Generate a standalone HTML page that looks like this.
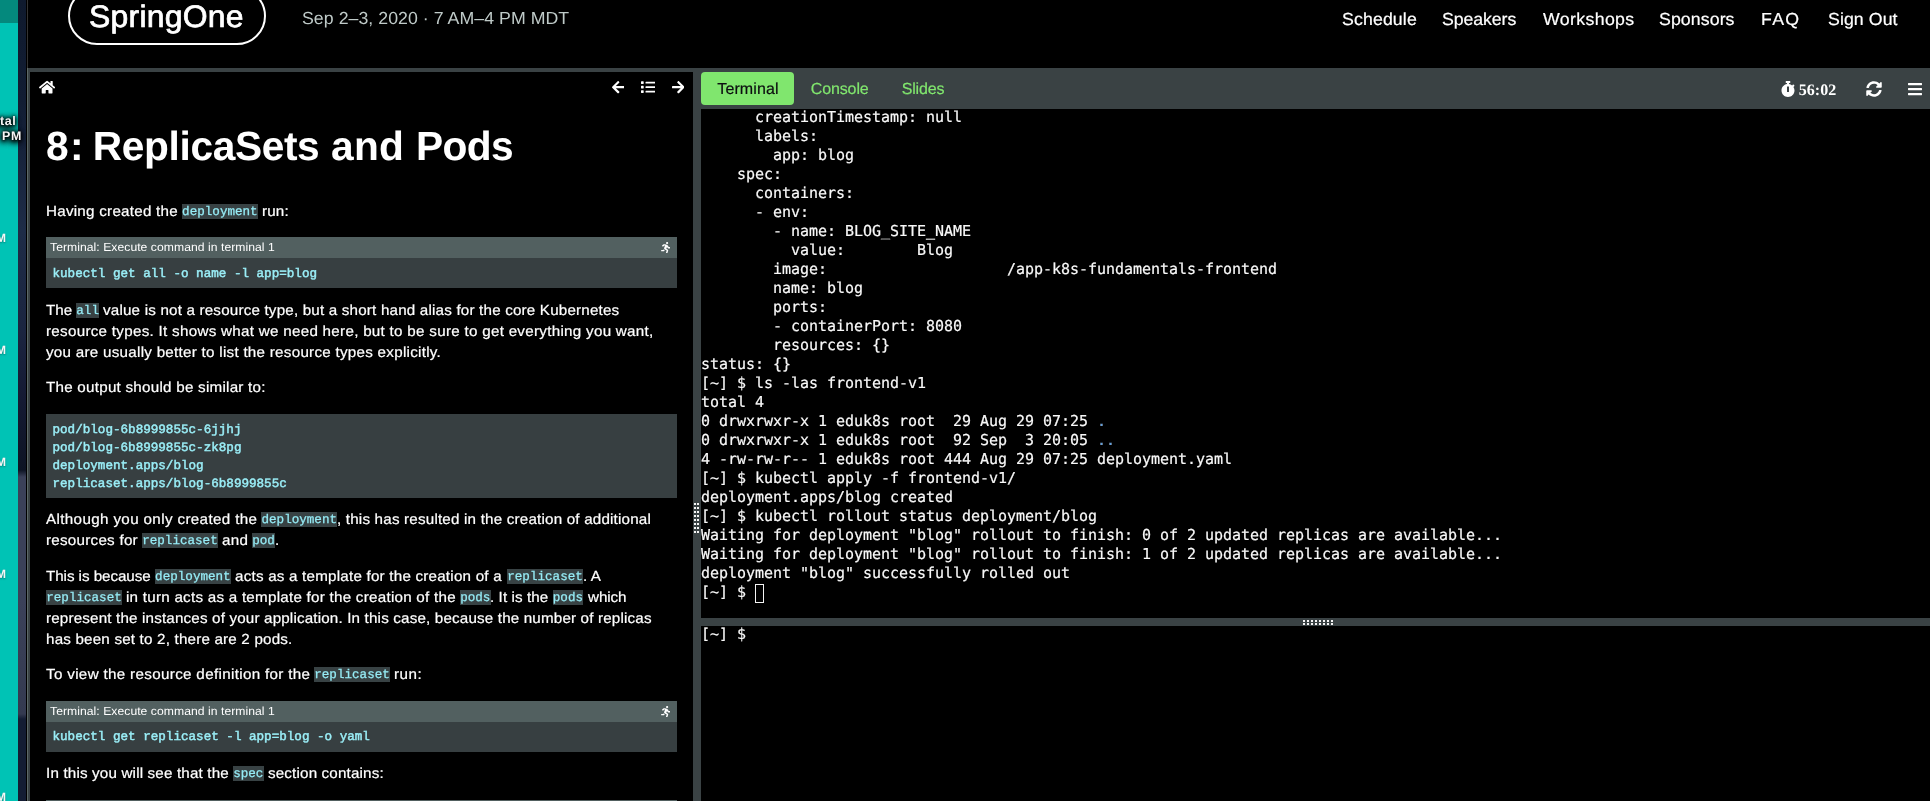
<!DOCTYPE html>
<html lang="en">
<head>
<meta charset="utf-8">
<title>SpringOne Workshop - 8: ReplicaSets and Pods</title>
<style>
*{box-sizing:border-box;margin:0;padding:0}
html,body{width:1930px;height:801px;overflow:hidden;background:#000}
body{position:relative;font-family:"Liberation Sans",sans-serif;color:#fff;text-rendering:geometricPrecision}
.abs{position:absolute}
#root{position:absolute;left:0;top:0;width:1930px;height:801px;overflow:hidden;will-change:transform;background:#000}
/* left edge strips */
#teal{left:0;top:0;width:18.1px;height:801px;background:#00c3b5}
#tealtop{left:0;top:0;width:18.1px;height:22.5px;background:#04897d}
#navy{left:18px;top:0;width:8.3px;height:801px;background:linear-gradient(to bottom,#0f1a2e 0,#121d33 100px,#1e2c47 230px,#1b2540 330px,#151a33 400px,#0d1424 470px,#3b4159 477px,#3b4159 600px,#343a50 714px,#141d33 719px,#141d33 801px)}
#edge{left:26.6px;top:0;width:1.4px;height:68px;background:#343434}
.side{color:#f6f6f6;font-weight:bold;font-size:12px;line-height:12px;white-space:pre;text-shadow:0 1px 2px rgba(0,0,0,.35)}
.side.dk{text-shadow:0 0 3px #000,0 1px 4px #000,0 0 6px #000,-1px 3px 6px #000,-2px 2px 7px #000}
/* header */
#pill{left:67.6px;top:-13px;width:198.6px;height:58px;border:2px solid #fff;border-radius:29px}
.logo{font-size:31px;line-height:34px;white-space:pre;-webkit-text-stroke:0.7px #fff}
.date{font-size:17.4px;line-height:20px;color:#bfcac8;white-space:pre}
.nav{font-size:17.4px;line-height:20px;white-space:pre;color:#fff;-webkit-text-stroke:0.2px #fff}
/* frame */
#ftop{left:27px;top:68px;width:1903px;height:4px;background:#3a4244}
#fleft{left:26.7px;top:68px;width:3.3px;height:733px;background:linear-gradient(to right,#5d6968 0,#5d6968 0.8px,#3a4244 0.8px)}
#vsplit{left:693px;top:72px;width:8px;height:729px;background:#3a4244}
#tabbar{left:701px;top:72px;width:1229px;height:37px;background:#3a4244}
#hsplit{left:701px;top:618px;width:1229px;height:8px;background:#3a4244}
.dot{position:absolute;width:2px;height:2px;background:#f4f4f4}
#tabTerm{left:701px;top:72px;width:93px;height:33px;background:#80e66e;border-radius:4px;color:#1d2124;font-size:16px;line-height:33px;text-align:center}
.tabt{z-index:5;font-size:16px;line-height:20px;color:#80e66e;white-space:pre;-webkit-text-stroke:0.2px #80e66e}
.tabt.tk{color:#0c0f10;-webkit-text-stroke:0.2px #0c0f10}
.clock{z-index:5;font-family:"Liberation Serif",serif;font-weight:bold;font-size:16px;line-height:20px;white-space:pre}
/* terminal */
.term{left:701px;width:1229px;overflow:hidden;background:#000}
.term pre{position:absolute;left:0;font-family:"DejaVu Sans Mono","Liberation Mono",monospace;font-size:15px;line-height:19px;color:#f8f8f8;white-space:pre;letter-spacing:-0.03px;-webkit-text-stroke:0.2px #f8f8f8}
.term .b{color:#5c9ddf}
.cursor{width:9.2px;height:19px;border:1px solid #f4f4f4}
/* workshop panel */
#panel{left:30px;top:72px;width:663px;height:729px;overflow:hidden;background:#000}
#panel svg{position:absolute;fill:#fff}
.h1{font-size:40.7px;line-height:44px;font-weight:bold;white-space:pre}
.ln{position:absolute;font-size:14.6px;line-height:21px;white-space:pre;color:#fff;-webkit-text-stroke:0.22px #fff}
code.chip{position:absolute;display:block;height:15px;line-height:17.3px;font-family:"Liberation Mono",monospace;font-size:12.6px;color:#96ecf6;background:#384244;white-space:pre;text-align:center;-webkit-text-stroke:0.25px #96ecf6}
.ic{fill:#fff}
.fx{transform-origin:0 50%}
.hdt{font-size:11.8px;line-height:21px;white-space:pre;color:#fff}
.blk{position:absolute;left:16px;width:631px;background:#373f41}
.blk .hd{height:21px;background:#526060;font-size:11.52px;line-height:21px;padding-left:4.7px;color:#fff;white-space:nowrap}
.blk pre{font-family:"Liberation Mono",monospace;font-weight:normal;-webkit-text-stroke:0.45px #9aeef7;font-size:12.6px;line-height:18px;color:#9aeef7;padding:6.7px 6.5px;white-space:pre}
</style>
</head>
<body>
<div id="root">
<!-- left strips -->
<div class="abs" id="teal"></div>
<div class="abs" id="tealtop"></div>
<div class="abs" id="navy"></div>
<div class="abs" id="edge"></div>

<div class="abs side dk" style="left:-7.6px;top:115px;font-size:12.5px;letter-spacing:0.6px">stal</div>
<div class="abs side dk" style="left:2px;top:130.4px;font-size:12.4px;letter-spacing:0.7px">PM</div>
<div class="abs side" style="left:-4px;top:231.6px">M</div>
<div class="abs side" style="left:-4px;top:343.6px">M</div>
<div class="abs side" style="left:-4px;top:455.6px">M</div>
<div class="abs side" style="left:-4px;top:567.6px">M</div>
<div class="abs side" style="left:-4px;top:790.6px">M</div>
<!-- header -->
<div class="abs" id="pill"></div>
<div class="abs fx logo" style="left:88.87px;top:0.0px;letter-spacing:0.236px;transform:scaleX(1.03)">SpringOne</div>
<div class="abs fx date" style="left:301.70px;top:8.1px;letter-spacing:0.035px;transform:scaleX(1.02)">Sep 2–3, 2020 · 7 AM–4 PM MDT</div>
<div class="abs fx nav" style="left:1341.70px;top:8.9px;letter-spacing:0.113px;transform:scaleX(1.02)">Schedule</div>
<div class="abs fx nav" style="left:1441.60px;top:8.9px;letter-spacing:-0.091px;transform:scaleX(1.02)">Speakers</div>
<div class="abs fx nav" style="left:1543.00px;top:8.9px;letter-spacing:0.341px;transform:scaleX(1.02)">Workshops</div>
<div class="abs fx nav" style="left:1659.40px;top:8.9px;letter-spacing:0.077px;transform:scaleX(1.02)">Sponsors</div>
<div class="abs fx nav" style="left:1760.78px;top:8.9px;letter-spacing:1.306px;transform:scaleX(1.02)">FAQ</div>
<div class="abs fx nav" style="left:1828.30px;top:8.9px;letter-spacing:0.070px;transform:scaleX(1.02)">Sign Out</div>
<div class="abs fx tabt tk" style="left:717.30px;top:79.6px;letter-spacing:0.098px;transform:scaleX(1.0)">Terminal</div>
<div class="abs fx tabt" style="left:810.80px;top:79.6px;letter-spacing:-0.134px;transform:scaleX(1.0)">Console</div>
<div class="abs fx tabt" style="left:901.70px;top:79.6px;letter-spacing:-0.176px;transform:scaleX(1.0)">Slides</div>
<div class="abs fx clock" style="left:1798.70px;top:81.3px;letter-spacing:0.043px;transform:scaleX(1.0)">56:02</div>

<!-- frame -->
<div class="abs" id="ftop"></div>
<div class="abs" id="fleft"></div>
<div class="abs" id="panel">
<svg class="abs ic" style="left:9.00px;top:7.60px;width:16.20px;height:14.40px" viewBox="0 0 576 512"><path d="M280.37 148.26L96 300.11V464a16 16 0 0 0 16 16l112.06-.29a16 16 0 0 0 15.92-16V368a16 16 0 0 1 16-16h64a16 16 0 0 1 16 16v95.64a16 16 0 0 0 16 16.05L464 480a16 16 0 0 0 16-16V300L295.67 148.26a12.19 12.19 0 0 0-15.3 0zM571.6 251.47L488 182.56V44.05a12 12 0 0 0-12-12h-56a12 12 0 0 0-12 12v72.61L318.47 43a48 48 0 0 0-61 0L4.34 251.47a12 12 0 0 0-1.6 16.9l25.5 31A12 12 0 0 0 45.15 301l235.22-193.74a12.19 12.19 0 0 1 15.3 0L530.9 301a12 12 0 0 0 16.9-1.6l25.5-31a12 12 0 0 0-1.7-16.93z"/></svg>
<svg class="abs ic" style="left:581.70px;top:7.74px;width:12.60px;height:14.40px" viewBox="0 0 448 512"><path d="M257.5 445.1l-22.2 22.2c-9.4 9.4-24.6 9.4-33.9 0L7 273c-9.4-9.4-9.4-24.6 0-33.9L201.4 44.7c9.4-9.4 24.6-9.4 33.9 0l22.2 22.2c9.5 9.5 9.3 25-.4 34.3L136.6 216H424c13.3 0 24 10.7 24 24v32c0 13.3-10.7 24-24 24H136.6l120.5 114.8c9.8 9.3 10 24.8.4 34.3z"/></svg>
<svg class="abs ic" style="left:610.50px;top:7.65px;width:14.40px;height:14.40px" viewBox="0 0 512 512"><path d="M80 368H16a16 16 0 0 0-16 16v64a16 16 0 0 0 16 16h64a16 16 0 0 0 16-16v-64a16 16 0 0 0-16-16zm0-320H16A16 16 0 0 0 0 64v64a16 16 0 0 0 16 16h64a16 16 0 0 0 16-16V64a16 16 0 0 0-16-16zm0 160H16a16 16 0 0 0-16 16v64a16 16 0 0 0 16 16h64a16 16 0 0 0 16-16v-64a16 16 0 0 0-16-16zm416 176H176a16 16 0 0 0-16 16v32a16 16 0 0 0 16 16h320a16 16 0 0 0 16-16v-32a16 16 0 0 0-16-16zm0-320H176a16 16 0 0 0-16 16v32a16 16 0 0 0 16 16h320a16 16 0 0 0 16-16V80a16 16 0 0 0-16-16zm0 160H176a16 16 0 0 0-16 16v32a16 16 0 0 0 16 16h320a16 16 0 0 0 16-16v-32a16 16 0 0 0-16-16z"/></svg>
<svg class="abs ic" style="left:641.70px;top:7.74px;width:12.60px;height:14.40px" viewBox="0 0 448 512"><path d="M190.5 66.9l22.2-22.2c9.4-9.4 24.6-9.4 33.9 0L441 239c9.4 9.4 9.4 24.6 0 33.9L246.6 467.3c-9.4 9.4-24.6 9.4-33.9 0l-22.2-22.2c-9.5-9.5-9.3-25 .4-34.3L311.4 296H24c-13.3 0-24-10.7-24-24v-32c0-13.3 10.7-24 24-24h287.4L190.9 101.2c-9.8-9.3-10-24.8-.4-34.3z"/></svg>
<h1 class="abs" style="left:0;top:0;width:663px;height:0"><span class="abs fx h1" style="left:16.10px;top:52.0px;letter-spacing:1.362px;transform:scaleX(1.0)">8:</span> <span class="abs fx h1" style="left:62.80px;top:52.0px;letter-spacing:-0.376px;transform:scaleX(1.0)">ReplicaSets</span> <span class="abs fx h1" style="left:301.10px;top:52.0px;letter-spacing:0.255px;transform:scaleX(1.0)">and</span> <span class="abs fx h1" style="left:386.00px;top:52.0px;letter-spacing:-0.619px;transform:scaleX(1.0)">Pods</span></h1>
<div class="blk" style="top:165px;height:51px"><div class="hd"></div><svg class="abs ic" style="left:614.80px;top:4.80px;width:9.36px;height:11.52px" viewBox="0 0 416 512"><path d="M272 96c26.510 0 48-21.490 48-48S298.510 0 272 0s-48 21.490-48 48 21.490 48 48 48zM113.690 317.470l-14.800 34.520H32c-17.670 0-32 14.330-32 32s14.330 32 32 32h77.450c19.250 0 36.580-11.440 44.110-29.090l8.790-20.520-10.670-6.300c-17.320-10.230-30.060-25.370-37.990-42.610zM384 223.990h-44.030l-26.060-53.250c-12.500-25.550-35.450-44.230-61.780-50.940l-71.080-21.140c-28.300-6.800-57.770-.55-80.840 17.140l-39.670 30.410c-14.030 10.750-16.690 30.830-5.920 44.860s30.840 16.660 44.860 5.920l39.690-30.410c7.670-5.890 17.440-8 25.270-6.140l14.700 4.370-37.460 87.390c-12.620 29.480-1.310 64.010 26.300 80.310l84.980 50.170-27.470 87.730c-5.280 16.860 4.110 34.810 20.970 40.090 3.190 1 6.410 1.480 9.580 1.480 13.610 0 26.230-8.770 30.520-22.450l31.640-101.060c5.910-20.770-2.890-43.080-21.640-54.390l-61.240-36.140 31.310-78.280 20.270 41.430c8 16.340 24.920 26.890 43.110 26.890H384c17.670 0 32-14.330 32-32s-14.330-31.990-32-31.990z"/></svg><pre>kubectl get all -o name -l app=blog</pre></div>
<div class="blk" style="top:342px;height:84px"><pre>pod/blog-6b8999855c-6jjhj
pod/blog-6b8999855c-zk8pg
deployment.apps/blog
replicaset.apps/blog-6b8999855c</pre></div>
<div class="blk" style="top:629px;height:51px"><div class="hd"></div><svg class="abs ic" style="left:614.80px;top:4.80px;width:9.36px;height:11.52px" viewBox="0 0 416 512"><path d="M272 96c26.510 0 48-21.490 48-48S298.510 0 272 0s-48 21.490-48 48 21.490 48 48 48zM113.690 317.470l-14.800 34.520H32c-17.670 0-32 14.330-32 32s14.330 32 32 32h77.450c19.250 0 36.580-11.440 44.110-29.090l8.790-20.520-10.670-6.300c-17.320-10.230-30.060-25.370-37.990-42.610zM384 223.990h-44.030l-26.060-53.250c-12.500-25.550-35.450-44.230-61.780-50.940l-71.080-21.140c-28.300-6.800-57.770-.55-80.840 17.140l-39.670 30.410c-14.030 10.750-16.690 30.830-5.920 44.860s30.840 16.660 44.860 5.920l39.690-30.410c7.670-5.890 17.440-8 25.270-6.140l14.700 4.370-37.460 87.390c-12.620 29.480-1.310 64.010 26.300 80.310l84.980 50.170-27.470 87.730c-5.280 16.860 4.110 34.810 20.970 40.090 3.190 1 6.410 1.480 9.580 1.480 13.610 0 26.230-8.770 30.520-22.450l31.640-101.060c5.910-20.770-2.890-43.080-21.640-54.390l-61.240-36.140 31.310-78.280 20.270 41.430c8 16.340 24.920 26.890 43.110 26.890H384c17.670 0 32-14.330 32-32s-14.330-31.990-32-31.990z"/></svg><pre style="padding-top:6.2px">kubectl get replicaset -l app=blog -o yaml</pre></div>
<div class="blk" style="top:728px;height:51px"><div class="hd"></div><svg class="abs ic" style="left:614.80px;top:4.80px;width:9.36px;height:11.52px" viewBox="0 0 416 512"><path d="M272 96c26.510 0 48-21.490 48-48S298.510 0 272 0s-48 21.490-48 48 21.490 48 48 48zM113.690 317.470l-14.800 34.520H32c-17.670 0-32 14.330-32 32s14.330 32 32 32h77.450c19.250 0 36.580-11.440 44.110-29.090l8.790-20.520-10.670-6.300c-17.320-10.230-30.060-25.370-37.990-42.610zM384 223.990h-44.030l-26.060-53.250c-12.500-25.550-35.450-44.230-61.780-50.940l-71.080-21.140c-28.300-6.800-57.770-.55-80.840 17.140l-39.670 30.410c-14.030 10.750-16.690 30.830-5.920 44.860s30.840 16.660 44.860 5.920l39.690-30.410c7.670-5.890 17.440-8 25.270-6.140l14.700 4.370-37.460 87.390c-12.620 29.480-1.310 64.010 26.300 80.310l84.980 50.170-27.470 87.730c-5.280 16.860 4.110 34.810 20.970 40.090 3.190 1 6.410 1.480 9.580 1.480 13.610 0 26.230-8.770 30.520-22.450l31.640-101.060c5.910-20.770-2.890-43.080-21.640-54.390l-61.240-36.140 31.310-78.280 20.270 41.430c8 16.340 24.920 26.890 43.110 26.890H384c17.670 0 32-14.330 32-32s-14.330-31.990-32-31.990z"/></svg><pre>kubectl get deployment -l app=blog -o yaml</pre></div>
<div class="abs fx hdt" style="left:20.20px;top:165.1px;letter-spacing:0.049px;transform:scaleX(1.03)">Terminal: Execute command in terminal 1</div>
<div class="abs fx hdt" style="left:20.20px;top:629.1px;letter-spacing:0.049px;transform:scaleX(1.03)">Terminal: Execute command in terminal 1</div>
<div class="abs fx hdt" style="left:20.20px;top:728.1px;letter-spacing:0.049px;transform:scaleX(1.03)">Terminal: Execute command in terminal 1</div>
<span class="ln fx" style="left:16.00px;top:130.0px;letter-spacing:0.243px;transform:scaleX(1.04)">Having created the</span>
<code class="chip" style="left:151.8px;top:132.0px;width:76.2px">deployment</code>
<span class="ln fx" style="left:232.20px;top:130.0px;letter-spacing:0.171px;transform:scaleX(1.04)">run:</span>
<span class="ln fx" style="left:16.00px;top:229.0px;letter-spacing:-0.020px;transform:scaleX(1.04)">The</span>
<code class="chip" style="left:46.2px;top:231.0px;width:22.9px">all</code>
<span class="ln fx" style="left:73.30px;top:229.0px;letter-spacing:0.182px;transform:scaleX(1.04)">value is not a resource type, but a short hand alias for the core Kubernetes</span>
<span class="ln fx" style="left:16.00px;top:250.0px;letter-spacing:0.275px;transform:scaleX(1.04)">resource types. It shows what we need here, but to be sure to get everything you want,</span>
<span class="ln fx" style="left:16.00px;top:271.0px;letter-spacing:0.261px;transform:scaleX(1.04)">you are usually better to list the resource types explicitly.</span>
<span class="ln fx" style="left:16.00px;top:306.0px;letter-spacing:0.240px;transform:scaleX(1.04)">The output should be similar to:</span>
<span class="ln fx" style="left:16.00px;top:438.0px;letter-spacing:0.350px;transform:scaleX(1.04)">Although you only created the</span>
<code class="chip" style="left:231.1px;top:440.0px;width:76.3px">deployment</code>
<span class="ln fx" style="left:307.16px;top:438.0px;letter-spacing:0.186px;transform:scaleX(1.04)">, this has resulted in the creation of additional</span>
<span class="ln fx" style="left:16.00px;top:459.0px;letter-spacing:0.246px;transform:scaleX(1.04)">resources for</span>
<code class="chip" style="left:112.0px;top:461.0px;width:75.9px">replicaset</code>
<span class="ln fx" style="left:192.10px;top:459.0px;letter-spacing:0.282px;transform:scaleX(1.04)">and</span>
<code class="chip" style="left:222.1px;top:461.0px;width:22.9px">pod</code>
<span class="ln fx" style="left:244.76px;top:459.0px;letter-spacing:0.000px;transform:scaleX(1.04)">.</span>
<span class="ln fx" style="left:16.00px;top:495.0px;letter-spacing:-0.051px;transform:scaleX(1.04)">This is because</span>
<code class="chip" style="left:124.8px;top:497.0px;width:76.2px">deployment</code>
<span class="ln fx" style="left:205.20px;top:495.0px;letter-spacing:0.208px;transform:scaleX(1.04)">acts as a template for the creation of a</span>
<code class="chip" style="left:476.9px;top:497.0px;width:76.3px">replicaset</code>
<span class="ln fx" style="left:552.96px;top:495.0px;letter-spacing:0.113px;transform:scaleX(1.04)">. A</span>
<code class="chip" style="left:16.0px;top:518.0px;width:76.0px">replicaset</code>
<span class="ln fx" style="left:96.20px;top:516.0px;letter-spacing:0.243px;transform:scaleX(1.04)">in turn acts as a template for the creation of the</span>
<code class="chip" style="left:429.9px;top:518.0px;width:30.8px">pods</code>
<span class="ln fx" style="left:460.46px;top:516.0px;letter-spacing:0.077px;transform:scaleX(1.04)">. It is the</span>
<code class="chip" style="left:522.7px;top:518.0px;width:30.5px">pods</code>
<span class="ln fx" style="left:558.44px;top:516.0px;letter-spacing:-0.078px;transform:scaleX(1.04)">which</span>
<span class="ln fx" style="left:16.00px;top:537.0px;letter-spacing:0.163px;transform:scaleX(1.04)">represent the instances of your application. In this case, because the number of replicas</span>
<span class="ln fx" style="left:16.00px;top:558.0px;letter-spacing:0.183px;transform:scaleX(1.04)">has been set to 2, there are 2 pods.</span>
<span class="ln fx" style="left:16.00px;top:593.0px;letter-spacing:0.319px;transform:scaleX(1.04)">To view the resource definition for the</span>
<code class="chip" style="left:284.1px;top:595.0px;width:75.9px">replicaset</code>
<span class="ln fx" style="left:364.20px;top:593.0px;letter-spacing:0.492px;transform:scaleX(1.04)">run:</span>
<span class="ln fx" style="left:16.00px;top:692.0px;letter-spacing:0.165px;transform:scaleX(1.04)">In this you will see that the</span>
<code class="chip" style="left:202.9px;top:694.0px;width:30.8px">spec</code>
<span class="ln fx" style="left:237.90px;top:692.0px;letter-spacing:0.158px;transform:scaleX(1.04)">section contains:</span>
</div>
<div class="abs" id="vsplit"></div>
<div class="abs" id="tabbar"></div>
<div class="abs" id="tabTerm"></div>
<svg class="abs ic" style="left:1781.00px;top:80.50px;width:14.00px;height:16.00px" viewBox="0 0 448 512"><path d="M432 304c0 114.9-93.1 208-208 208S16 418.9 16 304c0-104 76.300-190.2 176-205.5V64h-28c-6.600 0-12-5.400-12-12V12c0-6.600 5.400-12 12-12h120c6.600 0 12 5.400 12 12v40c0 6.600-5.400 12-12 12h-28v34.500c37.500 5.800 71.700 21.600 99.700 44.600l27.500-27.500c4.700-4.700 12.300-4.700 17 0l28.300 28.300c4.700 4.700 4.700 12.300 0 17l-29.400 29.400-.6.600C419.700 223.300 432 262.200 432 304zm-176 36V188.500c0-6.600-5.400-12-12-12h-40c-6.600 0-12 5.400-12 12V340c0 6.600 5.400 12 12 12h40c6.600 0 12-5.400 12-12z"/></svg>
<svg class="abs ic" style="left:1866.00px;top:80.80px;width:16.00px;height:16.00px" viewBox="0 0 512 512"><path d="M370.72 133.28C339.458 104.008 298.888 87.962 255.848 88c-77.458.068-144.328 53.178-162.791 126.85-1.344 5.363-6.122 9.15-11.651 9.15H24.103c-7.498 0-13.194-6.807-11.807-14.176C33.933 94.924 134.813 8 256 8c66.448 0 126.791 26.136 171.315 68.685L463.03 40.97C478.149 25.851 504 36.559 504 57.941V192c0 13.255-10.745 24-24 24H345.941c-21.382 0-32.09-25.851-16.971-40.971l41.75-41.749zM32 296h134.059c21.382 0 32.09 25.851 16.971 40.971l-41.75 41.75c31.262 29.273 71.835 45.319 114.876 45.28 77.418-.07 144.315-53.144 162.787-126.849 1.344-5.363 6.122-9.15 11.651-9.15h57.304c7.498 0 13.194 6.807 11.807 14.176C478.067 417.076 377.187 504 256 504c-66.448 0-126.791-26.136-171.315-68.685L48.97 471.03C33.851 486.149 8 475.441 8 454.059V320c0-13.255 10.745-24 24-24z"/></svg>
<svg class="abs ic" style="left:1908.00px;top:81.00px;width:14.00px;height:16.00px" viewBox="0 0 448 512"><path d="M16 132h416c8.837 0 16-7.163 16-16V76c0-8.837-7.163-16-16-16H16C7.163 60 0 67.163 0 76v40c0 8.837 7.163 16 16 16zm0 160h416c8.837 0 16-7.163 16-16v-40c0-8.837-7.163-16-16-16H16c-8.837 0-16 7.163-16 16v40c0 8.837 7.163 16 16 16zm0 160h416c8.837 0 16-7.163 16-16v-40c0-8.837-7.163-16-16-16H16c-8.837 0-16 7.163-16 16v40c0 8.837 7.163 16 16 16z"/></svg>

<div class="abs term" id="t1" style="top:109px;height:509px">
<pre style="top:-1px">      creationTimestamp: null
      labels:
        app: blog
    spec:
      containers:
      - env:
        - name: BLOG<span style="color:#1c1c1c">_</span>SITE_NAME
          value:        Blog
        image:                    /app-k8s-fundamentals-frontend
        name: blog
        ports:
        - containerPort: 8080
        resources: {}
status: {}
[~] $ ls -las frontend-v1
total 4
0 drwxrwxr-x 1 eduk8s root  29 Aug 29 07:25 <span class="b">.</span>
0 drwxrwxr-x 1 eduk8s root  92 Sep  3 20:05 <span class="b">..</span>
4 -rw-rw-r-- 1 eduk8s root 444 Aug 29 07:25 deployment.yaml
[~] $ kubectl apply -f frontend-v1/
deployment.apps/blog created
[~] $ kubectl rollout status deployment/blog
Waiting for deployment "blog" rollout to finish: 0 of 2 updated replicas are available...
Waiting for deployment "blog" rollout to finish: 1 of 2 updated replicas are available...
deployment "blog" successfully rolled out
[~] $ </pre><div class="abs cursor" style="left:54px;top:475px"></div>
</div>
<div class="abs" id="hsplit"></div>
<div class="abs term" id="t2" style="top:626px;height:175px">
<pre style="top:-1px">[~] $ </pre>
</div>
<i class="dot" style="left:694px;top:503px"></i><i class="dot" style="left:697px;top:503px"></i><i class="dot" style="left:694px;top:507px"></i><i class="dot" style="left:697px;top:507px"></i><i class="dot" style="left:694px;top:511px"></i><i class="dot" style="left:697px;top:511px"></i><i class="dot" style="left:694px;top:515px"></i><i class="dot" style="left:697px;top:515px"></i><i class="dot" style="left:694px;top:519px"></i><i class="dot" style="left:697px;top:519px"></i><i class="dot" style="left:694px;top:523px"></i><i class="dot" style="left:697px;top:523px"></i><i class="dot" style="left:694px;top:527px"></i><i class="dot" style="left:697px;top:527px"></i><i class="dot" style="left:694px;top:531px"></i><i class="dot" style="left:697px;top:531px"></i><i class="dot" style="left:1303px;top:620px"></i><i class="dot" style="left:1307px;top:620px"></i><i class="dot" style="left:1311px;top:620px"></i><i class="dot" style="left:1315px;top:620px"></i><i class="dot" style="left:1319px;top:620px"></i><i class="dot" style="left:1323px;top:620px"></i><i class="dot" style="left:1327px;top:620px"></i><i class="dot" style="left:1331px;top:620px"></i><i class="dot" style="left:1303px;top:623px"></i><i class="dot" style="left:1307px;top:623px"></i><i class="dot" style="left:1311px;top:623px"></i><i class="dot" style="left:1315px;top:623px"></i><i class="dot" style="left:1319px;top:623px"></i><i class="dot" style="left:1323px;top:623px"></i><i class="dot" style="left:1327px;top:623px"></i><i class="dot" style="left:1331px;top:623px"></i>
</div>
</body>
</html>
